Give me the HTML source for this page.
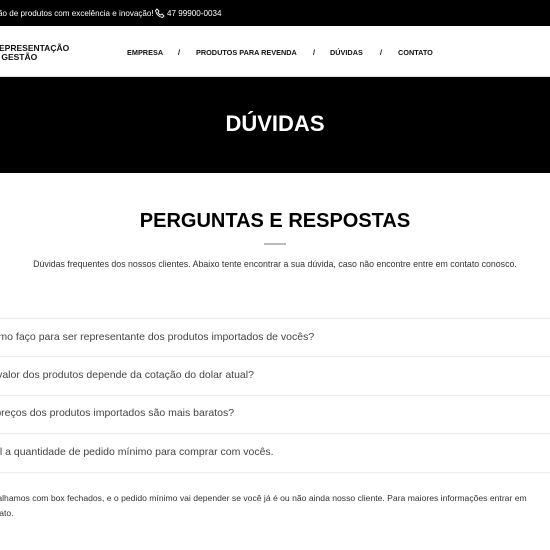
<!DOCTYPE html>
<html><head><meta charset="utf-8"><style>
*{margin:0;padding:0;box-sizing:border-box}
body{width:550px;height:550px;overflow:hidden;background:#fff;font-family:"Liberation Sans",sans-serif;position:relative}
.abs{position:absolute;white-space:nowrap}
#top{position:absolute;left:0;top:0;width:550px;height:26px;background:#000;color:#fff;font-size:8.1px}
#hdr{position:absolute;left:0;top:26px;width:550px;height:51px;background:#fff;border-bottom:1px solid #ddd}
#hero{position:absolute;left:0;top:77px;width:550px;height:96px;background:#000;color:#fff;text-align:center;font-weight:bold;font-size:22px;line-height:94px}
.nav{font-size:7.3px;font-weight:bold;color:#111;top:48px}
.line{position:absolute;left:0;width:550px;height:1px;background:#ececec}
.q{font-size:10.5px;color:#444}
</style></head><body>
<div id="top"><span class="abs" style="left:-2px;top:9px">ão de produtos com excelência e inovação!</span>
<svg class="abs" style="left:155px;top:8px" width="10" height="10" viewBox="0 0 10 10"><path d="M2 1 L4 3 L3 4.5 Q4 6.5 5.5 7 L7 6 L9 8 L7.5 9.5 Q2 8.5 0.5 2.5 Z" fill="none" stroke="#fff" stroke-width="0.9"/></svg>
<span class="abs" style="left:167px;top:9px">47 99900-0034</span></div>
<div id="hdr"></div>
<div class="abs" style="left:-1px;top:44px;font-size:8.5px;font-weight:bold;line-height:8.5px;color:#111">EPRESENTAÇÃO<br>&nbsp;GESTÃO</div>
<span class="abs nav" style="left:127px">EMPRESA</span>
<span class="abs nav" style="left:178px">/</span>
<span class="abs nav" style="left:196px">PRODUTOS PARA REVENDA</span>
<span class="abs nav" style="left:313px">/</span>
<span class="abs nav" style="left:330px">DÚVIDAS</span>
<span class="abs nav" style="left:380px">/</span>
<span class="abs nav" style="left:398px">CONTATO</span>
<div id="hero">DÚVIDAS</div>
<div class="abs" style="left:0;width:550px;text-align:center;top:210px;font-size:20px;font-weight:bold;color:#000">PERGUNTAS E RESPOSTAS</div>
<div class="abs" style="left:264px;top:243px;width:22px;height:2px;background:#bbb"></div>
<div class="abs" style="left:0;width:550px;text-align:center;top:259px;font-size:8.8px;color:#333">Dúvidas frequentes dos nossos clientes. Abaixo tente encontrar a sua dúvida, caso não encontre entre em contato conosco.</div>
<div class="line" style="top:318px"></div>
<div class="line" style="top:356px"></div>
<div class="line" style="top:395px"></div>
<div class="line" style="top:433px"></div>
<div class="line" style="top:472px"></div>
<span class="abs q" style="left:-15px;top:331px">Como faço para ser representante dos produtos importados de vocês?</span>
<span class="abs q" style="left:-14px;top:369px">O valor dos produtos depende da cotação do dolar atual?</span>
<span class="abs q" style="left:-21px;top:407px">Os preços dos produtos importados são mais baratos?</span>
<span class="abs q" style="left:-20px;top:446px">Qual a quantidade de pedido mínimo para comprar com vocês.</span>
<span class="abs" style="left:-20px;top:493px;font-size:8.6px;color:#333">Trabalhamos com box fechados, e o pedido mínimo vai depender se você já é ou não ainda nosso cliente. Para maiores informações entrar em</span>
<span class="abs" style="left:-17px;top:508px;font-size:8.6px;color:#333">contato.</span>
</body></html>
